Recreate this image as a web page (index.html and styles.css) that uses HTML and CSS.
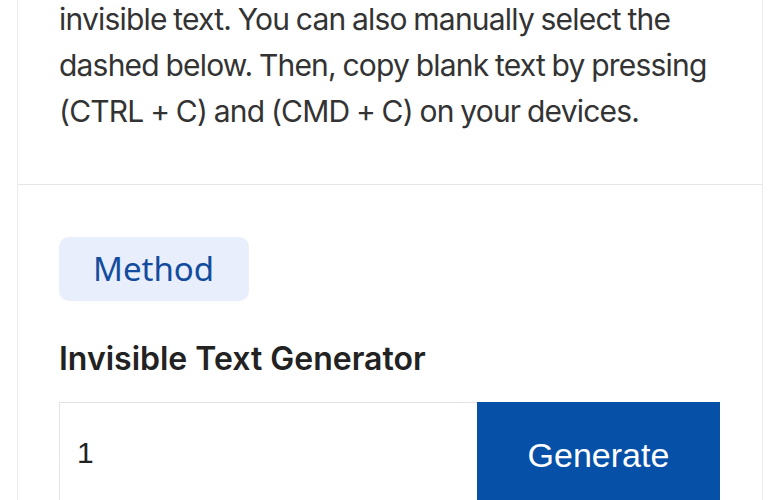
FILE: index.html
```html
<!DOCTYPE html>
<html>
<head>
<meta charset="utf-8">
<link rel="stylesheet" href="styles.css">
</head>
<body>
<div class="card">
  <section class="intro">
    <p class="desc">invisible text. You can also manually select the<br>dashed below. Then, copy blank text by pressing<br>(CTRL + C) and (CMD + C) on your devices.</p>
  </section>
  <section class="tool">
    <div class="badge">Method</div>
    <h2 class="title">Invisible Text Generator</h2>
    <div class="gen">
      <div class="field">1</div>
      <button class="btn">Generate</button>
    </div>
  </section>
</div>
</body>
</html>
```
FILE: styles.css
```css
html, body {
  margin: 0;
  padding: 0;
  background: #ffffff;
  overflow: hidden;
}
body {
  height: 500px;
}
.card {
  margin-left: 17px;
  width: 746px;
  border-left: 1px solid #ececec;
  border-right: 1px solid #ececec;
  box-sizing: border-box;
  height: 600px;
}
.intro {
  display: flow-root;
  padding: 0 10px 0 41px;
  height: 185px;
  border-bottom: 1px solid #e6e6e6;
  box-sizing: border-box;
}
.desc {
  margin: -4px 0 0;
  font-family: "Inter", sans-serif;
  font-size: 30px;
  line-height: 46px;
  letter-spacing: -0.8px;
  word-spacing: -1px;
  color: #333333;
  white-space: nowrap;
}
.tool {
  padding: 52px 42px 0 41px;
}
.badge {
  display: inline-flex;
  align-items: center;
  height: 64px;
  width: 190px;
  box-sizing: border-box;
  padding: 0 0 2px 34px;
  background: #e8eefb;
  border-radius: 10px;
  font-family: "Noto Sans", sans-serif;
  font-size: 33px;
  color: #134c9e;
}
.title {
  margin: 38px 0 0;
  font-family: "Inter", sans-serif;
  font-weight: 600;
  font-size: 32px;
  line-height: 40px;
  letter-spacing: 0;
  color: #222222;
}
.gen {
  display: flex;
  margin-top: 23px;
  height: 110px;
}
.field {
  width: 418px;
  box-sizing: border-box;
  border: 1px solid #e4e4e4;
  border-right: none;
  padding: 33px 0 0 17px;
  font-family: "Liberation Sans", sans-serif;
  font-size: 30px;
  color: #222222;
}
.btn {
  width: 243px;
  border: none;
  background: #0650a8;
  color: #ffffff;
  font-family: "Liberation Sans", sans-serif;
  font-size: 34px;
  padding: 0 0 4px;
}
```
